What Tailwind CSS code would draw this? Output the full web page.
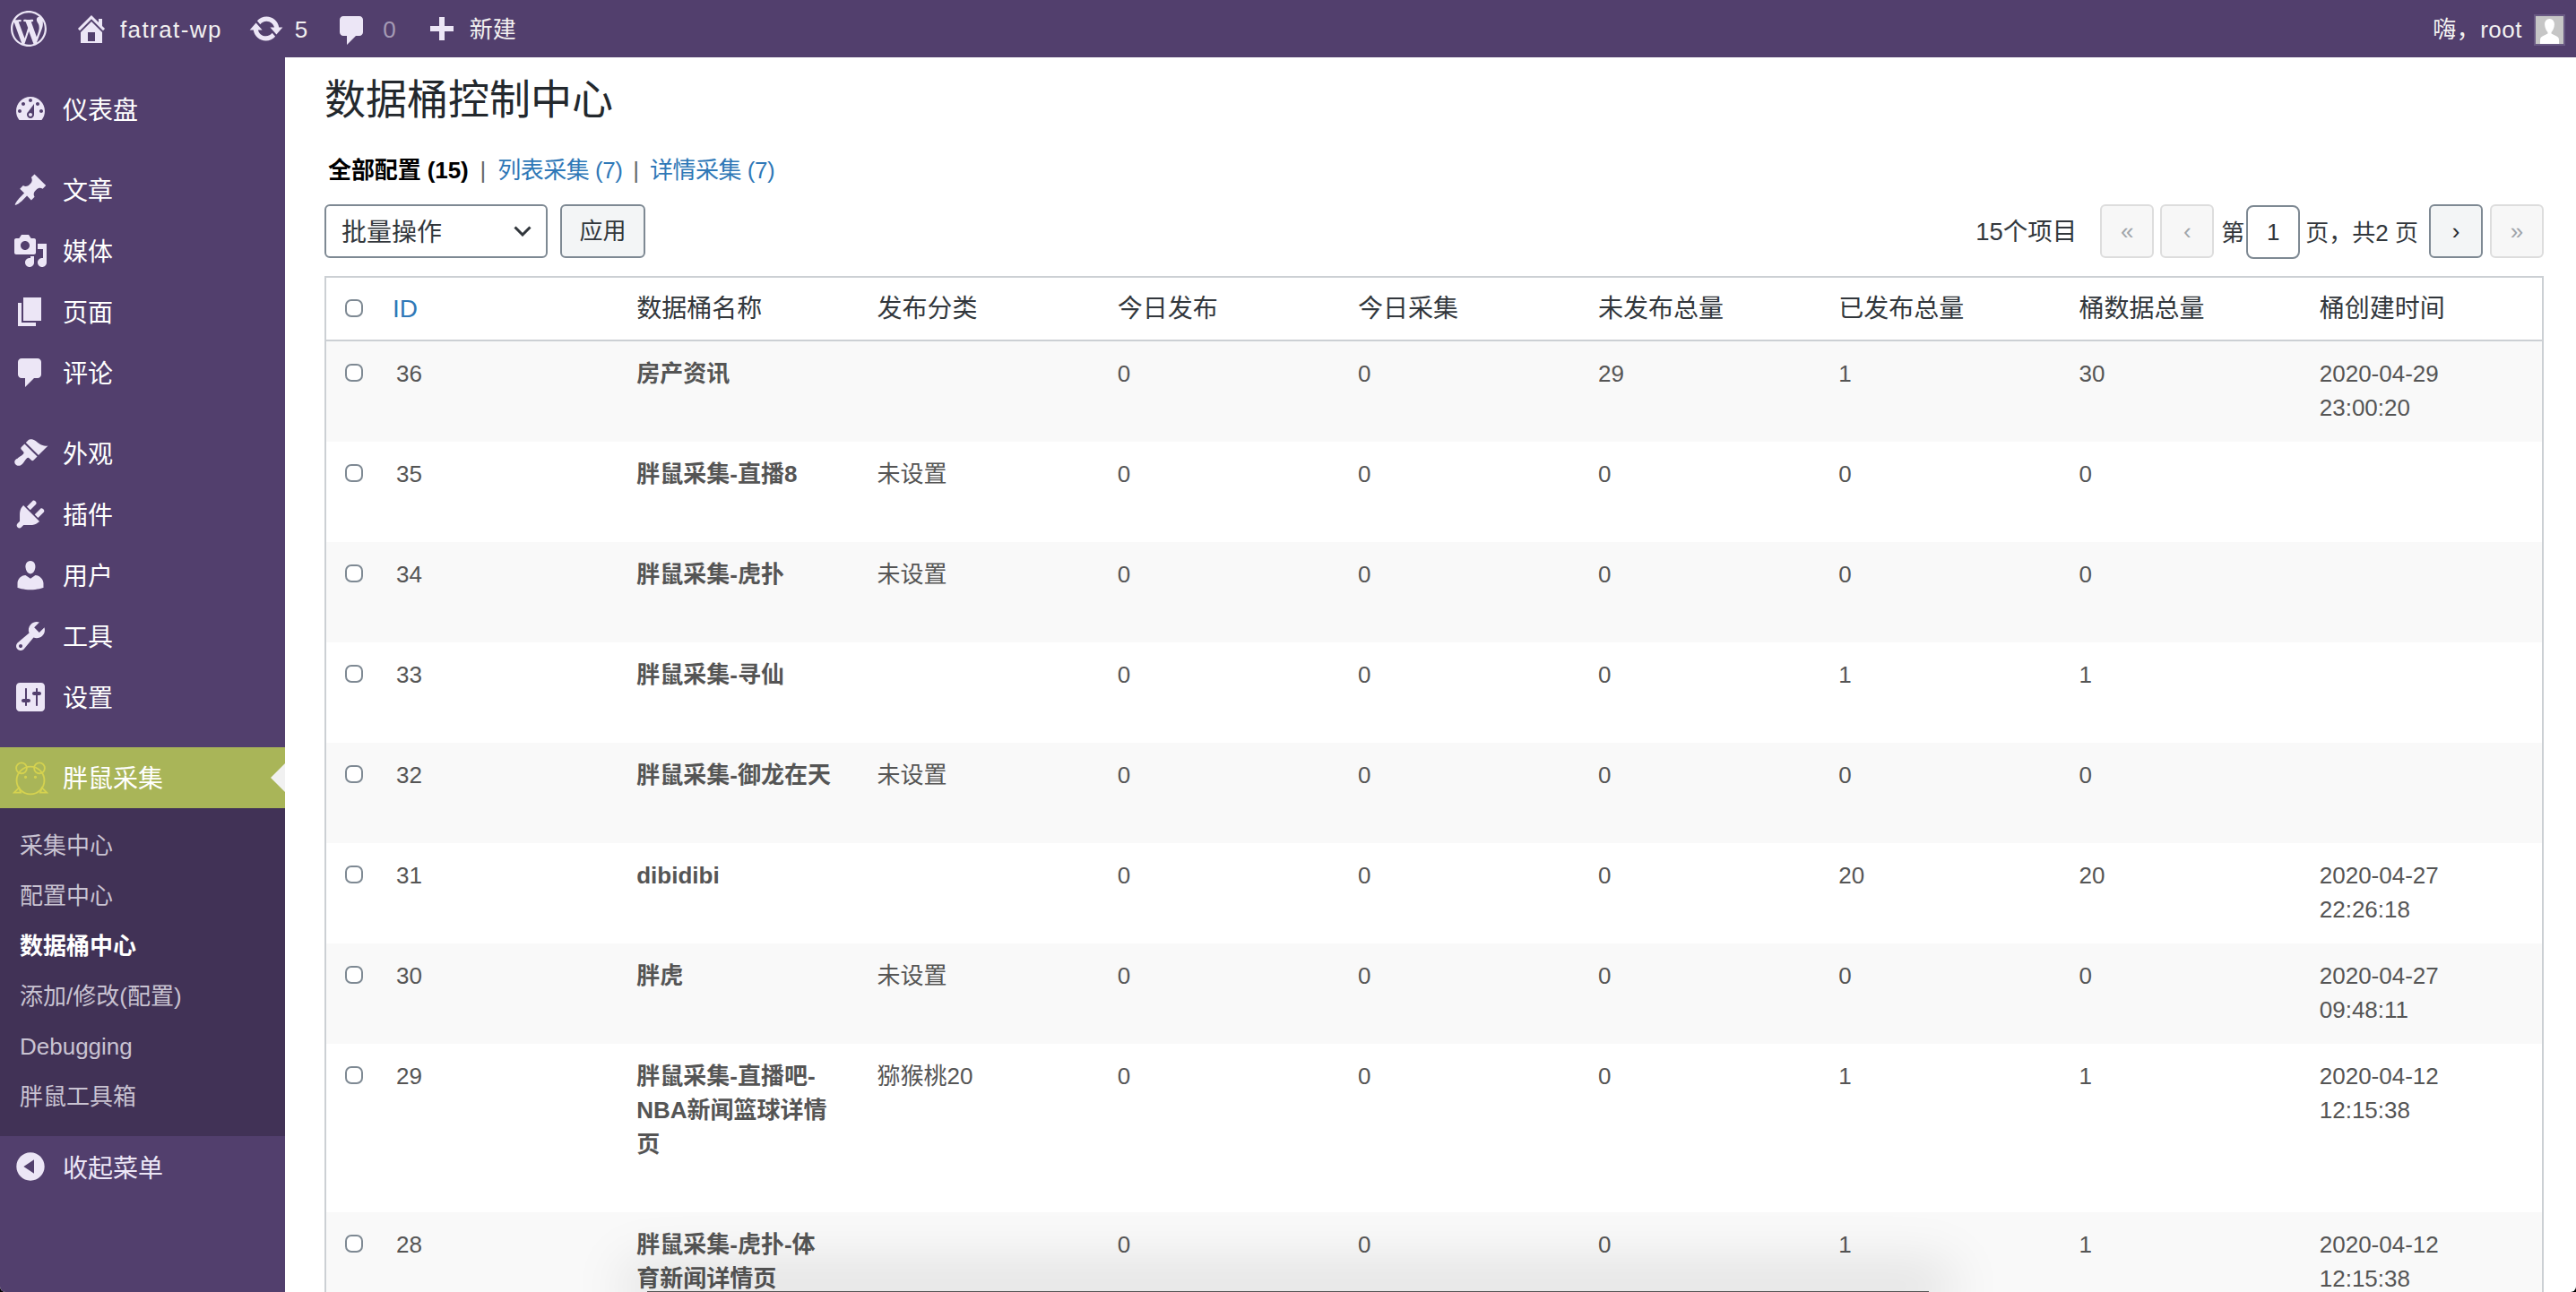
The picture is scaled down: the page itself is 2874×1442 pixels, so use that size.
<!DOCTYPE html>
<html lang="zh-CN" class="bg-black">

<head>
    <meta charset="UTF-8">
    <title>数据桶控制中心 ‹ fatrat-wp</title>
    <script src="https://cdn.jsdelivr.net/npm/@tailwindcss/browser@4"></script>
</head>

<body class="relative flex h-[1442px] flex-col overflow-hidden rounded-b-[6px] bg-white font-['Liberation_Sans','Noto_Sans_CJK_SC',sans-serif] text-[26px] text-[#444]">

    <!-- Admin bar -->
    <header class="flex h-[64px] shrink-0 items-center bg-[#523f6d] text-[26px] text-[#f3f1f1] [&>span]:translate-y-[1px]">
        <svg class="ml-[12px] h-[40px] w-[40px] fill-[#ece6f6]" viewBox="0 0 20 20"><path d="M20 10c0-5.51-4.49-10-10-10C4.48 0 0 4.49 0 10c0 5.52 4.48 10 10 10 5.51 0 10-4.48 10-10zM7.78 15.37L4.37 6.22c.55-.02 1.17-.08 1.17-.08.5-.06.44-1.13-.06-1.11 0 0-1.45.11-2.37.11-.18 0-.37 0-.58-.01C4.12 2.69 6.87 1.11 10 1.11c2.33 0 4.45.87 6.05 2.34-.68-.11-1.65.39-1.65 1.58 0 .74.45 1.36.9 2.1.35.61.55 1.36.55 2.46 0 1.49-1.4 5-1.4 5l-3.03-8.37c.54-.02.82-.17.82-.17.5-.05.44-1.25-.06-1.22 0 0-1.44.12-2.38.12-.87 0-2.33-.12-2.33-.12-.5-.03-.56 1.2-.06 1.22l.92.08 1.26 3.41zM17.41 10c.24-.64.74-1.87.43-4.25.7 1.29 1.05 2.71 1.05 4.25 0 3.29-1.73 6.24-4.4 7.78.97-2.59 1.94-5.2 2.92-7.78zM6.1 18.09C3.12 16.65 1.11 13.53 1.11 10c0-1.3.23-2.48.72-3.59C3.25 10.3 4.67 14.2 6.1 18.09zm4.03-6.63l2.58 6.98c-.86.29-1.76.45-2.71.45-.79 0-1.57-.11-2.29-.33.81-2.38 1.62-4.74 2.42-7.1z"/></svg>
        <svg class="ml-[30px] h-[40px] w-[40px] fill-[#ece6f6]" viewBox="0 0 20 20"><path fill-rule="evenodd" d="M16 8.5l1.53 1.53-1.06 1.06L10 4.62l-6.47 6.47-1.06-1.06L10 2.5l4 4v-2h2v4zm-6-2.46l6 5.99V18H4v-5.97zM12 17v-5H8v5h4z"/></svg>
        <span class="ml-[12px] tracking-[1.4px]">fatrat-wp</span>
        <svg class="ml-[29px] h-[40px] w-[40px] fill-[#ece6f6]" viewBox="0 0 20 20"><path d="M10.2 3.28c3.53 0 6.43 2.61 6.92 6h2.08l-3.5 4-3.5-4h2.32c-.45-1.97-2.21-3.45-4.32-3.45-1.45 0-2.73.71-3.54 1.78L4.95 5.66C6.23 4.2 8.11 3.28 10.2 3.28zm-.4 13.44c-3.52 0-6.43-2.61-6.92-6H.8l3.5-4c1.17 1.33 2.33 2.67 3.5 4H5.48c.45 1.97 2.21 3.45 4.32 3.45 1.45 0 2.73-.71 3.54-1.78l1.71 1.95c-1.28 1.46-3.15 2.38-5.25 2.38z"/></svg>
        <span class="ml-[12px]">5</span>
        <svg class="ml-[30px] mt-[4px] h-[40px] w-[40px] fill-[#ece6f6]" viewBox="0 0 20 20"><path d="M5 2h9c1.1 0 2 .9 2 2v7c0 1.1-.9 2-2 2h-2l-5 5v-5H5c-1.1 0-2-.9-2-2V4c0-1.1.9-2 2-2z"/></svg>
        <span class="ml-[14px] text-[#a59bb5]">0</span>
        <svg class="ml-[31px] h-[40px] w-[40px] fill-[#ece6f6]" viewBox="0 0 20 20"><path d="M8.5 3.5h3v5h5v3h-5v5h-3v-5h-5v-3h5z"/></svg>
        <span class="ml-[11px]">新建</span>
        <span class="ml-auto tracking-[0.5px]">嗨，root</span>
        <span class="ml-[13px] mr-[12px] flex h-[35px] w-[35px] items-end justify-center overflow-hidden border-2 border-[#6a5a84] bg-[#c6c6c6]">
            <svg class="h-[31px] w-[31px] fill-white" viewBox="0 0 31 31"><path d="M15.5 3c3.6 0 5.6 3 5.4 6.6-.2 3.6-1.8 7-3.4 8.4v1.6l6 3c1.6.8 2.5 2 2.5 4.4V31H5v-4c0-2.4.9-3.6 2.5-4.4l6-3V18c-1.6-1.4-3.2-4.8-3.4-8.4C9.9 6 11.900 3 15.500 3z"/></svg>
        </span>
    </header>

    <div class="flex min-h-0 flex-1">
        <!-- Sidebar -->
        <aside class="w-[318px] shrink-0 bg-[#523f6d] pt-[24px] text-[28px] text-white">
            <nav>
                <a class="flex h-[68px] items-center gap-[16px] pl-[14px]" href="#">
                    <svg class="h-[40px] w-[40px] fill-[#ece6f6]" viewBox="0 0 20 20"><path fill-rule="evenodd" d="M3.76 16h12.48c1.1-1.37 1.76-3.11 1.76-5 0-4.42-3.58-8-8-8s-8 3.58-8 8c0 1.89.66 3.63 1.76 5zM10 4c.55 0 1 .45 1 1s-.45 1-1 1-1-.45-1-1 .45-1 1-1zM6 6c.55 0 1 .45 1 1s-.45 1-1 1-1-.45-1-1 .45-1 1-1zm8 0c.55 0 1 .45 1 1s-.45 1-1 1-1-.45-1-1 .45-1 1-1zm-5.370 5.550L12 7v6c0 1.100-.9 2-2 2s-2-.9-2-2c0-.57.24-1.080.63-1.450zM4 10c.55 0 1 .45 1 1s-.45 1-1 1-1-.45-1-1 .45-1 1-1zm12 0c.55 0 1 .45 1 1s-.45 1-1 1-1-.45-1-1 .45-1 1-1zm-5 3c0-.55-.45-1-1-1s-1 .45-1 1 .45 1 1 1 1-.45 1-1z"/></svg>
                    <span class="translate-y-[2px]">仪表盘</span>
                </a>

                <div class="mt-[22px]">
                    <a class="flex h-[68px] items-center gap-[16px] pl-[14px]" href="#">
                        <svg class="h-[40px] w-[40px] fill-[#ece6f6]" viewBox="0 0 20 20"><path d="M10.440 3.020l1.820-1.820 6.360 6.350-1.830 1.820c-1.050-.68-2.480-.57-3.410.36l-.75.75c-.92.93-1.040 2.350-.35 3.410l-1.830 1.820-2.410-2.410-2.800 2.790c-.42.42-3.380 2.710-3.800 2.290s1.860-3.390 2.280-3.810l2.790-2.790L4.100 9.360l1.830-1.820c1.050.69 2.480.57 3.400-.36l.75-.75c.93-.92 1.050-2.350.36-3.410z"/></svg>
                        <span class="translate-y-[2px]">文章</span>
                    </a>
                    <a class="flex h-[68px] items-center gap-[16px] pl-[14px]" href="#">
                        <svg class="h-[40px] w-[40px] fill-[#ece6f6]" viewBox="0 0 20 20"><path fill-rule="evenodd" d="M13 11V4c0-.55-.45-1-1-1h-1.670L9 1H5L3.670 3H2c-.55 0-1 .45-1 1v7c0 .55.45 1 1 1h10c.55 0 1-.45 1-1zM7 4.500c1.380 0 2.500 1.120 2.500 2.500S8.380 9.500 7 9.500 4.500 8.380 4.500 7 5.620 4.500 7 4.500zM14 6h5v10.500c0 1.380-1.120 2.500-2.500 2.500S14 17.880 14 16.500s1.120-2.500 2.500-2.500c.17 0 .34.02.5.05V9h-3V6zm-4 8.050V13h2v3.500c0 1.380-1.120 2.500-2.500 2.500S7 17.880 7 16.500 8.120 14 9.500 14c.17 0 .34.02.5.05z"/></svg>
                        <span class="translate-y-[2px]">媒体</span>
                    </a>
                    <a class="flex h-[68px] items-center gap-[16px] pl-[14px]" href="#">
                        <svg class="h-[40px] w-[40px] fill-[#ece6f6]" viewBox="0 0 20 20"><path d="M6 15V2h10v13H6zm-1 1h8v2H3V5h2v11z"/></svg>
                        <span class="translate-y-[2px]">页面</span>
                    </a>
                    <a class="flex h-[68px] items-center gap-[16px] pl-[14px]" href="#">
                        <svg class="h-[40px] w-[40px] fill-[#ece6f6]" viewBox="0 0 20 20"><path d="M5 2h9c1.100 0 2 .9 2 2v7c0 1.100-.9 2-2 2h-2l-5 5v-5H5c-1.100 0-2-.9-2-2V4c0-1.100.9-2 2-2z"/></svg>
                        <span class="translate-y-[2px]">评论</span>
                    </a>
                </div>

                <div class="mt-[22px]">
                    <a class="flex h-[68px] items-center gap-[16px] pl-[14px]" href="#">
                        <svg class="h-[40px] w-[40px] fill-[#ece6f6]" viewBox="0 0 20 20"><path d="M14.480 11.060L7.410 3.990l1.500-1.500c.5-.56 2.300-.47 3.510.32 1.210.8 1.430 1.280 2.910 2.100 1.180.64 2.450 1.260 4.450.85zm-.71.71L6.700 4.700 4.930 6.470c-.39.39-.39 1.020 0 1.410l1.060 1.060c.39.39.39 1.030 0 1.420-.6.6-1.430 1.110-2.210 1.690-.35.26-.7.53-1.010.84C1.430 13.230.4 14.870 1.760 16.230c.21.21.44.37.69.49.91.44 2.060.13 2.960-.78.31-.3.58-.65.84-1 .58-.78 1.090-1.600 1.690-2.210.39-.39 1.020-.39 1.410 0l1.060 1.060c.39.39 1.020.39 1.410 0z"/></svg>
                        <span class="translate-y-[2px]">外观</span>
                    </a>
                    <a class="flex h-[68px] items-center gap-[16px] pl-[14px]" href="#">
                        <svg class="h-[40px] w-[40px] fill-[#ece6f6]" viewBox="0 0 20 20"><path d="M13.110 4.360L9.870 7.600 8 5.730l3.240-3.240c.35-.34 1.050-.2 1.560.32.52.51.66 1.210.31 1.550zm-8 1.770l.91-1.120 9.010 9.010-1.190.84c-.71.71-2.630 1.160-3.820 1.160H6.140L4.900 17.260c-.59.59-1.540.59-2.120 0-.59-.58-.59-1.530 0-2.120l1.240-1.240v-3.880c0-1.130.4-3.190 1.090-3.890zm7.260 3.970l3.240-3.240c.34-.35 1.040-.21 1.550.31.52.51.66 1.210.31 1.550l-3.240 3.250z"/></svg>
                        <span class="translate-y-[2px]">插件</span>
                    </a>
                    <a class="flex h-[68px] items-center gap-[16px] pl-[14px]" href="#">
                        <svg class="h-[40px] w-[40px] fill-[#ece6f6]" viewBox="0 0 20 20"><path d="M10 9.250c-2.270 0-2.730-3.440-2.730-3.440C7 4.020 7.820 2 9.970 2c2.160 0 2.980 2.020 2.710 3.810 0 0-.41 3.440-2.680 3.440zm0 2.570L12.720 10c2.390 0 4.520 2.330 4.520 4.530v2.490s-3.650 1.130-7.240 1.130c-3.650 0-7.240-1.130-7.240-1.130v-2.490c0-2.250 1.940-4.480 4.470-4.480z"/></svg>
                        <span class="translate-y-[2px]">用户</span>
                    </a>
                    <a class="flex h-[68px] items-center gap-[16px] pl-[14px]" href="#">
                        <svg class="h-[40px] w-[40px] fill-[#ece6f6]" viewBox="0 0 20 20"><path fill-rule="evenodd" d="M16.680 9.770c-1.340 1.340-3.300 1.670-4.950.99l-5.410 6.520c-.99.99-2.590.99-3.580 0s-.99-2.590 0-3.570l6.520-5.420c-.68-1.650-.35-3.610.99-4.950 1.280-1.280 3.120-1.620 4.720-1.060l-2.890 2.890 2.820 2.820 2.860-2.870c.53 1.580.18 3.390-1.080 4.650zM3.810 16.210c.4.39 1.040.39 1.430 0 .4-.4.4-1.040 0-1.430-.39-.4-1.030-.4-1.430 0-.39.39-.39 1.030 0 1.430z"/></svg>
                        <span class="translate-y-[2px]">工具</span>
                    </a>
                    <a class="flex h-[68px] items-center gap-[16px] pl-[14px]" href="#">
                        <svg class="h-[40px] w-[40px] fill-[#ece6f6]" viewBox="0 0 20 20"><path fill-rule="evenodd" d="M18 16V4c0-1.100-.9-2-2-2H4c-1.100 0-2 .9-2 2v12c0 1.100.9 2 2 2h12c1.100 0 2-.9 2-2zM8 11h1c.55 0 1 .45 1 1s-.45 1-1 1H8v1.500c0 .28-.22.5-.5.5s-.5-.22-.5-.5V13H6c-.55 0-1-.45-1-1s.45-1 1-1h1V5.500c0-.28.22-.5.5-.5s.5.22.5.5V11zm5-2h-1c-.55 0-1-.45-1-1s.45-1 1-1h1V5.500c0-.28.22-.5.5-.5s.5.22.5.5V7h1c.55 0 1 .45 1 1s-.45 1-1 1h-1v5.500c0 .28-.22.5-.5.5s-.5-.22-.5-.5V9z"/></svg>
                        <span class="translate-y-[2px]">设置</span>
                    </a>
                </div>

                <!-- Active plugin menu -->
                <div class="mt-[22px]">
                    <a class="relative flex h-[68px] items-center gap-[16px] bg-[#a9b558] pl-[14px]" href="#">
                        <svg class="mt-[6px] h-[44px] w-[40px] fill-none stroke-[#d5d24f] stroke-[2]" viewBox="0 0 44 44">
                            <circle cx="22" cy="22" r="17"/>
                            <circle cx="11" cy="7" r="6.500"/>
                            <circle cx="33" cy="7" r="6.500"/>
                            <circle cx="16" cy="18" r=".8"/>
                            <circle cx="28" cy="18" r=".8"/>
                            <path d="M2 37l6-6 2 6zM42 37l-6-6-2 6z"/>
                        </svg>
                        <span class="translate-y-[2px]">胖鼠采集</span>
                        <span class="absolute right-0 top-1/2 h-0 w-0 -translate-y-1/2 border-y-[16px] border-r-[16px] border-y-transparent border-r-[#f1f1f1]"></span>
                    </a>
                    <ul class="bg-[#413256] pb-[18px] pt-[12px] text-[26px] text-[#c9c3d2] [&>li]:flex [&>li]:h-[56px] [&>li]:items-center [&>li]:pl-[22px] [&>li]:pt-[4px]">
                        <li>采集中心</li>
                        <li>配置中心</li>
                        <li class="font-bold text-white">数据桶中心</li>
                        <li>添加/修改(配置)</li>
                        <li>Debugging</li>
                        <li>胖鼠工具箱</li>
                    </ul>
                </div>

                <a class="flex h-[68px] items-center gap-[16px] pl-[14px] text-[#ece6f6]" href="#">
                    <svg class="h-[40px] w-[40px] fill-[#ece6f6]" viewBox="0 0 20 20"><path fill-rule="evenodd" d="M10 2.160c4.330 0 7.840 3.510 7.840 7.840s-3.510 7.840-7.840 7.840S2.160 14.330 2.160 10 5.710 2.160 10 2.160zm2 11.720V6.120L6.180 9.970z"/></svg>
                    <span class="translate-y-[3px]">收起菜单</span>
                </a>
            </nav>
        </aside>

        <!-- Content -->
        <main class="min-w-0 flex-1 pl-[44px] pr-[36px] pt-[16px]">
            <h1 class="text-[46px] leading-[62px] text-[#23282d]">数据桶控制中心</h1>

            <ul class="mt-[29px] flex h-[38px] items-center pl-[4px] leading-[38px] text-[#2f78b7]">
                <li><a class="font-bold tracking-[-0.1px] text-black" href="#">全部配置 (15)</a></li>
                <li class="mx-[13px] text-[#666]">|</li>
                <li><a class="tracking-[-0.5px]" href="#">列表采集 (7)</a></li>
                <li class="mx-[12px] text-[#666]">|</li>
                <li><a class="tracking-[-0.5px]" href="#">详情采集 (7)</a></li>
            </ul>

            <div class="mt-[19px] flex h-[60px] items-center justify-between">
                <div class="flex items-center gap-[14px]">
                    <div class="flex h-[60px] w-[249px] items-center justify-between rounded-[6px] border-2 border-[#7e8993] bg-white pl-[17px] pr-[16px] text-[28px] text-[#32373c]">
                        <span class="translate-y-[2px]">批量操作</span>
                        <svg class="h-[12px] w-[20px] fill-none stroke-[#32373c] stroke-[3]" viewBox="0 0 20 12"><path d="M1.500 1.500L10 10l8.500-8.500"/></svg>
                    </div>
                    <button class="h-[60px] w-[95px] rounded-[6px] border-2 border-[#7e8993] bg-[#f3f5f6] text-[#32373c]">应用</button>
                </div>
                <div class="flex items-center text-[#32373c]">
                    <span class="mr-[26px] translate-y-[1px] text-[27.5px]">15个项目</span>
                    <span class="flex h-[60px] w-[60px] items-center justify-center rounded-[6px] border-2 border-[#ddd] bg-[#f7f7f7] text-[#a0a5aa]">«</span>
                    <span class="ml-[7px] flex h-[60px] w-[60px] items-center justify-center rounded-[6px] border-2 border-[#ddd] bg-[#f7f7f7] text-[#a0a5aa]">‹</span>
                    <span class="ml-[8px] mr-[2px] translate-y-[2px]">第</span>
                    <span class="flex h-[60px] w-[60px] translate-y-[1px] items-center justify-center rounded-[8px] border-2 border-[#7e8993] bg-white">1</span>
                    <span class="ml-[6px] translate-y-[2px]">页，共2 页</span>
                    <span class="ml-[12px] flex h-[60px] w-[60px] items-center justify-center rounded-[6px] border-2 border-[#7e8993] bg-[#f3f5f6] text-[#23282d]">›</span>
                    <span class="ml-[8px] flex h-[60px] w-[60px] items-center justify-center rounded-[6px] border-2 border-[#ddd] bg-[#f7f7f7] text-[#a0a5aa]">»</span>
                </div>
            </div>

            <div class="mt-[20px] border-2 border-b-0 border-[#ccd0d4]">
                <table class="w-full table-fixed border-separate border-spacing-0 text-left">
                    <colgroup>
                        <col class="w-[58px]">
                        <col><col><col><col><col><col><col><col><col>
                    </colgroup>
                    <thead class="text-[28px] text-[#32373c] [&_th]:h-[71px] [&_th]:border-b-2 [&_th]:border-[#ccd0d4] [&_th]:pl-5 [&_th]:font-normal">
                        <tr>
                            <th class="!pl-[21px]"><input class="mb-[2px] block h-[20px] w-[20px] appearance-none rounded-[7px] border-2 border-[#7e8993] bg-white" type="checkbox"></th>
                            <th class="!pl-[16px]"><a class="text-[#2f78b7]" href="#">ID</a></th>
                            <th>数据桶名称</th>
                            <th>发布分类</th>
                            <th>今日发布</th>
                            <th>今日采集</th>
                            <th>未发布总量</th>
                            <th>已发布总量</th>
                            <th>桶数据总量</th>
                            <th>桶创建时间</th>
                        </tr>
                    </thead>
                    <tbody class="leading-[38px] text-[#555] [&_td]:pb-[19px] [&_td]:pl-5 [&_td]:pt-[17px] [&_td]:align-top [&_td:first-child]:pl-[21px] [&_td:nth-child(3)]:pr-6 [&_td:nth-child(3)]:font-bold [&>tr:nth-child(odd)]:bg-[#f9f9f9]">
                        <tr>
                            <td><input class="mt-[8px] block h-[20px] w-[20px] appearance-none rounded-[7px] border-2 border-[#7e8993] bg-white" type="checkbox"></td>
                            <td>36</td>
                            <td>房产资讯<div class="h-[38px]"></div></td>
                            <td></td><td>0</td><td>0</td><td>29</td><td>1</td><td>30</td>
                            <td>2020-04-29<br>23:00:20</td>
                        </tr>
                        <tr>
                            <td><input class="mt-[8px] block h-[20px] w-[20px] appearance-none rounded-[7px] border-2 border-[#7e8993] bg-white" type="checkbox"></td>
                            <td>35</td>
                            <td>胖鼠采集-直播8<div class="h-[38px]"></div></td>
                            <td>未设置</td><td>0</td><td>0</td><td>0</td><td>0</td><td>0</td>
                            <td></td>
                        </tr>
                        <tr>
                            <td><input class="mt-[8px] block h-[20px] w-[20px] appearance-none rounded-[7px] border-2 border-[#7e8993] bg-white" type="checkbox"></td>
                            <td>34</td>
                            <td>胖鼠采集-虎扑<div class="h-[38px]"></div></td>
                            <td>未设置</td><td>0</td><td>0</td><td>0</td><td>0</td><td>0</td>
                            <td></td>
                        </tr>
                        <tr>
                            <td><input class="mt-[8px] block h-[20px] w-[20px] appearance-none rounded-[7px] border-2 border-[#7e8993] bg-white" type="checkbox"></td>
                            <td>33</td>
                            <td>胖鼠采集-寻仙<div class="h-[38px]"></div></td>
                            <td></td><td>0</td><td>0</td><td>0</td><td>1</td><td>1</td>
                            <td></td>
                        </tr>
                        <tr>
                            <td><input class="mt-[8px] block h-[20px] w-[20px] appearance-none rounded-[7px] border-2 border-[#7e8993] bg-white" type="checkbox"></td>
                            <td>32</td>
                            <td>胖鼠采集-御龙在天<div class="h-[38px]"></div></td>
                            <td>未设置</td><td>0</td><td>0</td><td>0</td><td>0</td><td>0</td>
                            <td></td>
                        </tr>
                        <tr>
                            <td><input class="mt-[8px] block h-[20px] w-[20px] appearance-none rounded-[7px] border-2 border-[#7e8993] bg-white" type="checkbox"></td>
                            <td>31</td>
                            <td>dibidibi<div class="h-[38px]"></div></td>
                            <td></td><td>0</td><td>0</td><td>0</td><td>20</td><td>20</td>
                            <td>2020-04-27<br>22:26:18</td>
                        </tr>
                        <tr>
                            <td><input class="mt-[8px] block h-[20px] w-[20px] appearance-none rounded-[7px] border-2 border-[#7e8993] bg-white" type="checkbox"></td>
                            <td>30</td>
                            <td>胖虎<div class="h-[38px]"></div></td>
                            <td>未设置</td><td>0</td><td>0</td><td>0</td><td>0</td><td>0</td>
                            <td>2020-04-27<br>09:48:11</td>
                        </tr>
                        <tr>
                            <td><input class="mt-[8px] block h-[20px] w-[20px] appearance-none rounded-[7px] border-2 border-[#7e8993] bg-white" type="checkbox"></td>
                            <td>29</td>
                            <td>胖鼠采集-直播吧-NBA新闻篮球详情页<div class="h-[38px]"></div></td>
                            <td>猕猴桃20</td><td>0</td><td>0</td><td>0</td><td>1</td><td>1</td>
                            <td>2020-04-12<br>12:15:38</td>
                        </tr>
                        <tr>
                            <td><input class="mt-[8px] block h-[20px] w-[20px] appearance-none rounded-[7px] border-2 border-[#7e8993] bg-white" type="checkbox"></td>
                            <td>28</td>
                            <td>胖鼠采集-虎扑-体育新闻详情页<div class="h-[38px]"></div></td>
                            <td></td><td>0</td><td>0</td><td>0</td><td>1</td><td>1</td>
                            <td>2020-04-12<br>12:15:38</td>
                        </tr>
                    </tbody>
                </table>
            </div>
        </main>
    </div>

    <!-- Shadow of the window below, lies over the table -->
    <div class="absolute bottom-0 left-[722px] h-px w-[1430px] bg-[#555] shadow-[0_-6px_60px_26px_rgba(0,0,0,0.1)]"></div>
</body>

</html>
